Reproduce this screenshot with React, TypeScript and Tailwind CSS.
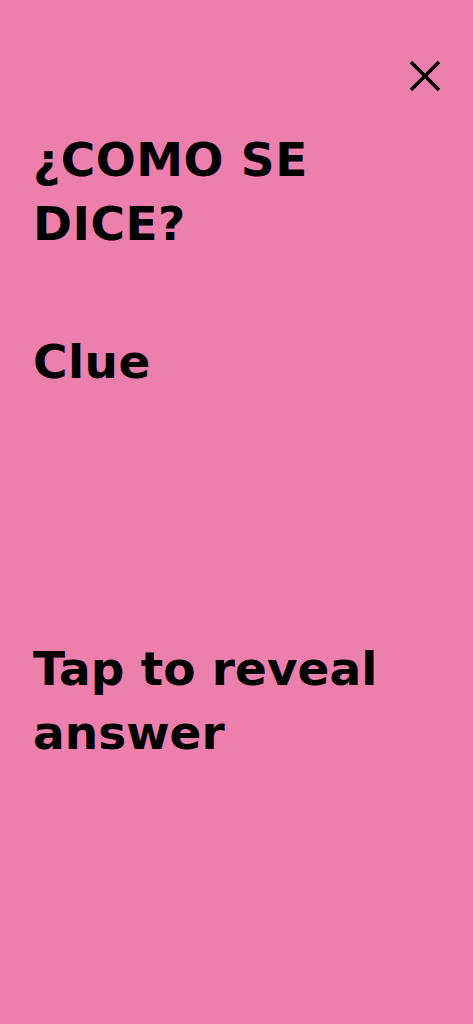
import React from "react";

export default function App() {
  return (
    <div className="min-h-[1024px] w-full bg-[#ec7fab] text-black flex flex-col" style={{ fontFamily: '"DejaVu Sans", sans-serif' }}>
      <div className="flex justify-end pt-[59px] pr-[31px]">
        <svg width="34" height="34" viewBox="0 0 34 34" fill="none" stroke="black" strokeWidth="3.5" strokeLinecap="butt">
          <line x1="3" y1="3" x2="31" y2="31" />
          <line x1="31" y1="3" x2="3" y2="31" />
        </svg>
      </div>
      <div className="px-[33px] pt-[35px] flex flex-col">
        <h1 className="text-[47px] leading-[64px] font-bold tracking-[0.5px]">¿COMO SE DICE?</h1>
        <p className="mt-[74px] text-[47px] leading-[64px] font-bold tracking-[0.5px]">Clue</p>
        <p className="mt-[243px] text-[47px] leading-[64px] font-bold">Tap to reveal answer</p>
      </div>
    </div>
  );
}
